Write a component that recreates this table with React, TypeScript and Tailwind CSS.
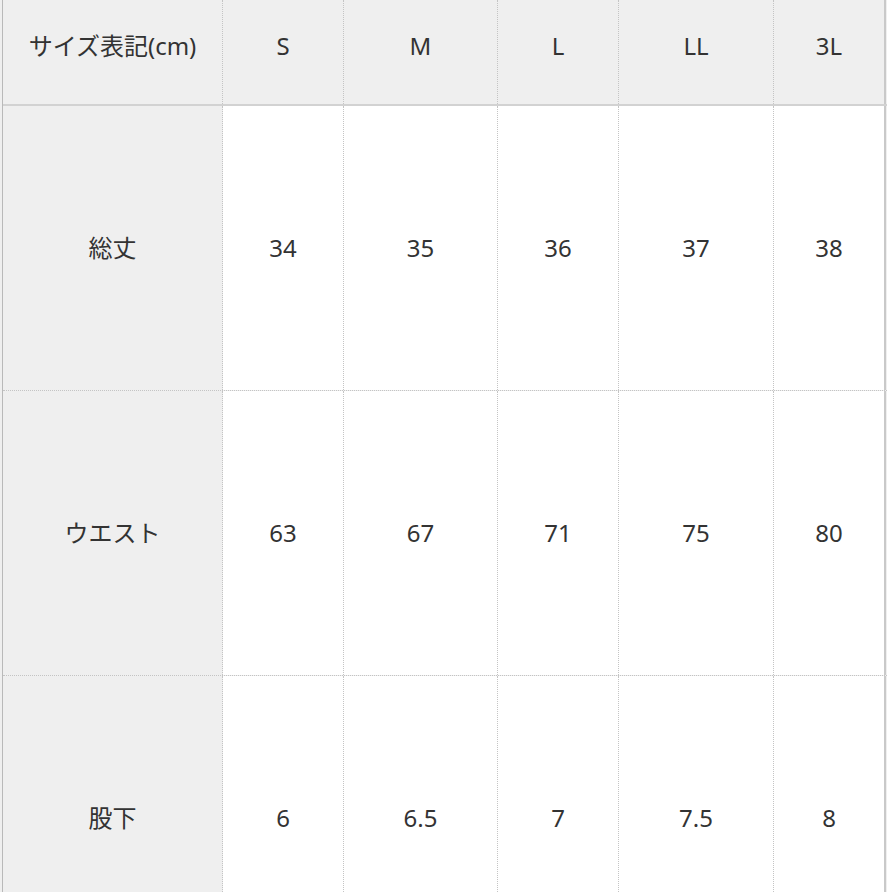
const sizes = ['S', 'M', 'L', 'LL', '3L'];

const rows: { label: string; values: string[] }[] = [
  { label: '総丈', values: ['34', '35', '36', '37', '38'] },
  { label: 'ウエスト', values: ['63', '67', '71', '75', '80'] },
  { label: '股下', values: ['6', '6.5', '7', '7.5', '8'] },
];

const colWidths = ['w-[220px]', 'w-[121px]', 'w-[154px]', 'w-[121px]', 'w-[155px]', 'w-[112px]'];

function Cell({
  text,
  width,
  head,
  last,
  top,
}: {
  text: string;
  width: string;
  head?: boolean;
  last?: boolean;
  top?: boolean;
}) {
  return (
    <div
      className={[
        'flex shrink-0 items-center justify-center',
        width,
        head ? 'bg-[#efefef]' : 'bg-white',
        top ? 'pb-[12px]' : '',
        last ? 'border-r-2 border-r-[#c9c9c9]' : 'border-r border-dotted border-r-[#c4c4c4]',
      ].join(' ')}
    >
      {text}
    </div>
  );
}

export default function App() {
  return (
    <div
      className="h-[892px] w-[892px] overflow-hidden bg-white text-[24px] text-[#333333]"
      style={{ fontFamily: '"Noto Sans", "Noto Sans CJK JP", sans-serif' }}
    >
      <div className="w-[887px] bg-[#efefef] pl-[2px]">
        <div className="border-l border-l-[#b9b9b9]">
          <div className="flex h-[106px] border-b-2 border-b-[#d2d2d2]">
            <Cell text="サイズ表記(cm)" width={colWidths[0]} head top />
            {sizes.map((s, i) => (
              <Cell key={s} text={s} width={colWidths[i + 1]} head top last={i === sizes.length - 1} />
            ))}
          </div>
          {rows.map((row) => (
            <div key={row.label} className="flex h-[285px] border-b border-dotted border-b-[#c4c4c4]">
              <Cell text={row.label} width={colWidths[0]} head />
              {row.values.map((v, i) => (
                <Cell key={i} text={v} width={colWidths[i + 1]} last={i === row.values.length - 1} />
              ))}
            </div>
          ))}
        </div>
      </div>
    </div>
  );
}
